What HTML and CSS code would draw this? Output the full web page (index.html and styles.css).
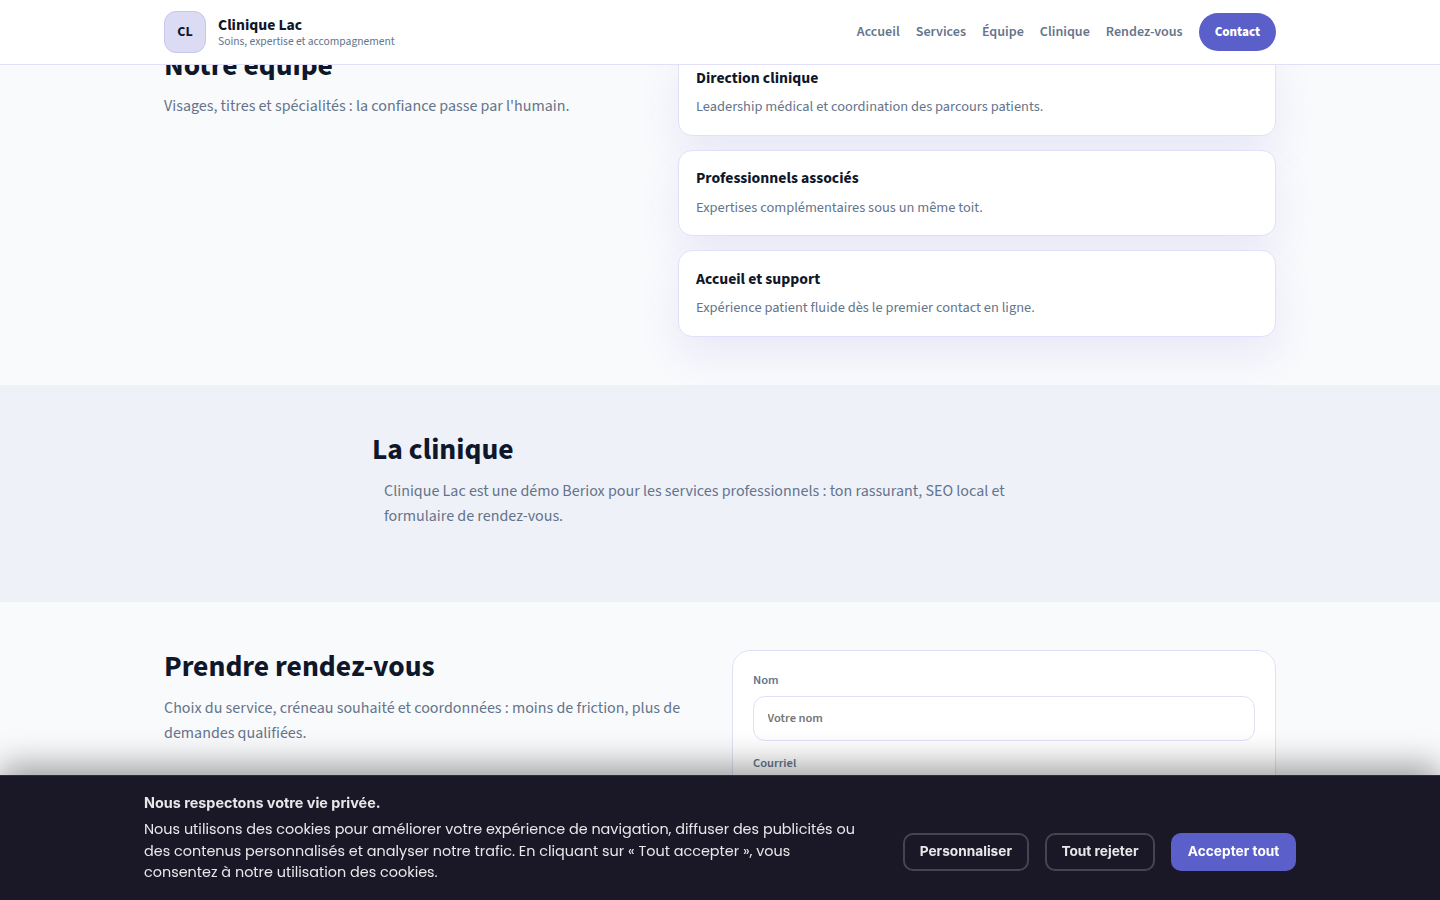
FILE: index.html
```html
<!DOCTYPE html>
<html lang="fr">
<head>
<meta charset="utf-8">
<title>Clinique Lac</title>
<link rel="stylesheet" href="styles.css">
</head>
<body>
<header class="topbar">
  <div class="container topbar-inner">
    <div class="brand">
      <div class="brand-mark">CL</div>
      <div class="brand-text">
        <span class="brand-name">Clinique Lac</span>
        <span class="brand-tag">Soins, expertise et accompagnement</span>
      </div>
    </div>
    <nav class="nav">
      <a>Accueil</a><a>Services</a><a>Équipe</a><a>Clinique</a><a>Rendez-vous</a>
      <a class="nav-cta">Contact</a>
    </nav>
  </div>
</header>
<main class="page">
  <section class="section">
    <div class="container team">
      <div class="team-intro">
        <h2>Notre équipe</h2>
        <p class="lead">Visages, titres et spécialités : la confiance passe par l'humain.</p>
      </div>
      <div class="team-list">
        <article class="card"><h3>Direction clinique</h3><p>Leadership médical et coordination des parcours patients.</p></article>
        <article class="card"><h3>Professionnels associés</h3><p>Expertises complémentaires sous un même toit.</p></article>
        <article class="card"><h3>Accueil et support</h3><p>Expérience patient fluide dès le premier contact en ligne.</p></article>
      </div>
    </div>
  </section>
  <section class="section section-tint">
    <div class="clinic">
      <h2>La clinique</h2>
      <p class="lead">Clinique Lac est une démo Beriox pour les services professionnels : ton rassurant, SEO local et<br>formulaire de rendez-vous.</p>
    </div>
  </section>
  <section class="section">
    <div class="container booking">
      <div>
        <h2>Prendre rendez-vous</h2>
        <p class="lead">Choix du service, créneau souhaité et coordonnées : moins de friction, plus de<br>demandes qualifiées.</p>
      </div>
      <form class="form">
        <label>Nom<input type="text" placeholder="Votre nom"></label>
        <label>Courriel<input type="email"></label>
      </form>
    </div>
  </section>
</main>
<aside class="cookies">
  <div class="cookies-inner">
    <div class="cookies-text">
      <strong>Nous respectons votre vie privée.</strong>
      <p>Nous utilisons des cookies pour améliorer votre expérience de navigation, diffuser des publicités ou<br>des contenus personnalisés et analyser notre trafic. En cliquant sur « Tout accepter », vous<br>consentez à notre utilisation des cookies.</p>
    </div>
    <div class="cookies-actions">
      <button>Personnaliser</button><button>Tout rejeter</button><button class="primary">Accepter tout</button>
    </div>
  </div>
</aside>
</body>
</html>
```
FILE: styles.css
```css
* { box-sizing: border-box; }
body { margin: 0; height: 100vh; overflow: hidden; background: #f9fafc; color: #0f172a; font-family: "Source Sans 3", "Noto Sans CJK SC", sans-serif; }
h2, h3, p { margin: 0; }
.container { width: 1112px; margin: 0 auto; }
.topbar { position: fixed; inset: 0 0 auto; height: 65px; background: #fff; border-bottom: 1px solid #e2e0f8; z-index: 5; }
.topbar-inner { height: 64px; display: flex; align-items: center; justify-content: space-between; }
.brand { display: flex; gap: 12px; align-items: center; }
.brand-mark { width: 42px; height: 42px; border: 1px solid #c9c6ee; border-radius: 12px; background: #dbdbf3; display: grid; place-items: center; font-weight: 700; font-size: 14px; line-height: 1; }
.brand-text { display: flex; flex-direction: column; }
.brand-name { font-weight: 700; font-size: 15.7px; line-height: 18px; }
.brand-tag { font-size: 11.52px; line-height: 15px; color: #64748b; }
.nav { display: flex; gap: 16px; align-items: center; font-size: 14.05px; font-weight: 600; color: #64748b; }
.nav-cta { background: #5b5fc9; color: #fff; height: 38px; border-radius: 19px; padding: 0 16px; display: flex; align-items: center; font-size: 13.05px; font-weight: 800; }
.page { padding-top: 1px; }
.section { padding: 48px 0; }
.section-tint { background: rgba(92, 95, 204, .06); height: 217px; }
.team { display: grid; grid-template-columns: 1fr 598px; }
.team-list { display: grid; gap: 14px; }
h2 { font-size: 29.6px; line-height: 33px; padding-top: 1px; margin-bottom: 12px; font-weight: 700; }
.lead { font-size: 16px; line-height: 25px; color: #64748b; }
.team-intro .lead { margin-top: -13px; padding-top: 12px; }
.card { background: #fff; border: 1px solid #e2e0f8; border-radius: 14px; padding: 18.5px 17px 16.7px; box-shadow: 0 18px 40px rgba(91, 84, 210, .1); }
.card h3 { font-size: 15.7px; line-height: 19.2px; margin-bottom: 8.4px; }
.card p { font-size: 14.4px; line-height: 21.8px; color: #64748b; }
.clinic { width: 696px; margin: 0 auto; }
.clinic .lead { padding-left: 12px; }
.booking { display: grid; grid-template-columns: 1fr 544px; }
.form { background: #fff; border: 1px solid #e2e0f8; border-radius: 18px; padding: 21px 20px 20px; display: grid; gap: 14px; }
.form label { display: grid; gap: 7px; font-size: 12.5px; line-height: 17px; font-weight: 600; color: #64748b; justify-items: start; }
.form input { width: 100%; height: 45px; border: 1px solid #e2e0f8; border-radius: 12px; padding: 0 13.5px; font: inherit; background: #fff; }
.cookies { position: fixed; inset: auto 0 0; height: 125px; background: #1a1726; border-top: 1px solid #2f2c3a; box-shadow: 0 -8px 32px rgba(0, 0, 0, .4); color: #e8e8ea; z-index: 6; font-family: Inter, sans-serif; }
.cookies-inner { width: 1152px; margin: 0 auto; padding-top: 16px; display: flex; justify-content: space-between; align-items: center; }
.cookies-text strong { display: block; font-size: 14.4px; line-height: 22px; margin-bottom: 5px; }
.cookies-text p { font-family: Poppins, Inter, sans-serif; font-size: 14.4px; line-height: 21.6px; white-space: nowrap; }
.cookies-actions { display: flex; gap: 16px; padding-top: 28px; }
.cookies button { height: 38px; border: 2px solid #474451; border-radius: 10px; background: none; color: #e8e8ea; padding: 0 14.7px 2px; font: 700 13.7px Inter, sans-serif; }
.cookies .primary { background: #5b5fc9; border-color: #5b5fc9; color: #fff; }
```
